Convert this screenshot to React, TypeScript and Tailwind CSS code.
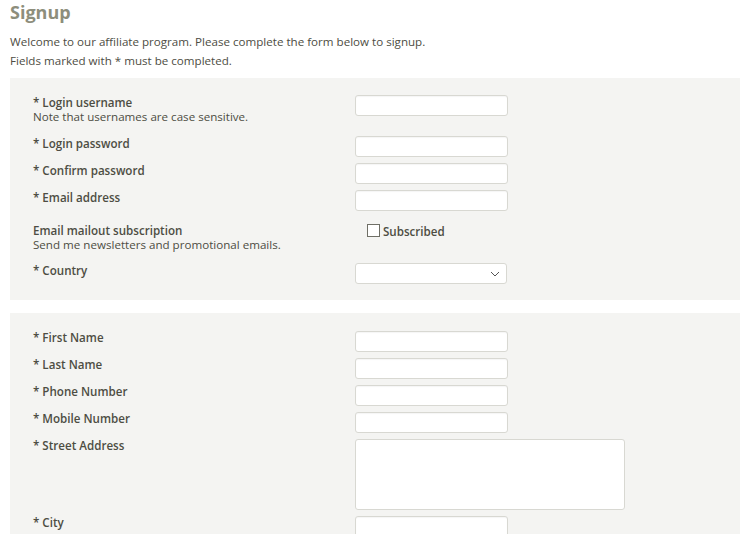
import React from 'react'

const font = { fontFamily: '"Open Sans", "Liberation Sans", sans-serif' }

function TextInput() {
  return (
    <input
      type="text"
      className="h-[21px] w-[153px] rounded-[3px] border border-[#d8d8d2] bg-white outline-none shadow-[inset_0_1px_1px_rgba(0,0,0,0.04)]"
    />
  )
}

function Label({ text, note }: { text: string; note?: string }) {
  return (
    <div className="text-[11.6px] leading-[14px] text-[#4d4d43]">
      <div className="font-semibold">{text}</div>
      {note && <div>{note}</div>}
    </div>
  )
}

export default function App() {
  return (
    <div className="min-h-[534px] bg-white pl-[10px] text-[#4d4d43]" style={font}>
      <h1 className="text-[18px] font-bold leading-[24px] text-[#8d8e7c]">Signup</h1>
      <p className="mt-[8px] text-[11.6px] leading-[19px]">
        Welcome to our affiliate program. Please complete the form below to signup.
      </p>
      <p className="text-[11.6px] leading-[19px]">Fields marked with * must be completed.</p>

      <div className="mt-[8px] bg-[#f4f4f2] pb-[16px] pl-[23px] pt-[17px]">
        <div className="grid grid-cols-[322px_1fr]">
          <div className="mt-[1px]">
            <Label text="* Login username" note="Note that usernames are case sensitive." />
          </div>
          <TextInput />
        </div>
        <div className="mt-[12px] grid grid-cols-[322px_1fr]">
          <div className="mt-[1px]"><Label text="* Login password" /></div>
          <TextInput />
        </div>
        <div className="mt-[6px] grid grid-cols-[322px_1fr]">
          <div className="mt-[1px]"><Label text="* Confirm password" /></div>
          <TextInput />
        </div>
        <div className="mt-[6px] grid grid-cols-[322px_1fr]">
          <div className="mt-[1px]"><Label text="* Email address" /></div>
          <TextInput />
        </div>
        <div className="mt-[12px] grid grid-cols-[322px_1fr]">
          <div className="mt-[1px]">
            <Label text="Email mailout subscription" note="Send me newsletters and promotional emails." />
          </div>
          <label className="ml-[12px] mt-[1px] flex items-start gap-[3px] text-[11.6px] font-semibold leading-[14px]">
            <span className="inline-block h-[13px] w-[13px] border border-[#6f6f66] bg-white" />
            <span className="mt-[1px]">Subscribed</span>
          </label>
        </div>
        <div className="mt-[11px] grid grid-cols-[322px_1fr]">
          <div className="mt-[1px]"><Label text="* Country" /></div>
          <div className="flex h-[21px] w-[152px] items-center justify-end rounded-[3px] border border-[#d8d8d2] bg-white pr-[6px]">
            <svg width="10" height="6" viewBox="0 0 10 6" fill="none">
              <path d="M1 1l4 4 4-4" stroke="#555" strokeWidth="1" />
            </svg>
          </div>
        </div>
      </div>

      <div className="mt-[13px] bg-[#f4f4f2] pb-[16px] pl-[23px] pt-[18px]">
        <div className="grid grid-cols-[322px_1fr]">
          <Label text="* First Name" />
          <TextInput />
        </div>
        <div className="mt-[6px] grid grid-cols-[322px_1fr]">
          <Label text="* Last Name" />
          <TextInput />
        </div>
        <div className="mt-[6px] grid grid-cols-[322px_1fr]">
          <Label text="* Phone Number" />
          <TextInput />
        </div>
        <div className="mt-[6px] grid grid-cols-[322px_1fr]">
          <Label text="* Mobile Number" />
          <TextInput />
        </div>
        <div className="mt-[6px] grid grid-cols-[322px_1fr]">
          <Label text="* Street Address" />
          <textarea className="h-[71px] w-[270px] resize-none rounded-[3px] border border-[#d8d8d2] bg-white outline-none" />
        </div>
        <div className="mt-[6px] grid grid-cols-[322px_1fr]">
          <Label text="* City" />
          <TextInput />
        </div>
      </div>
    </div>
  )
}
